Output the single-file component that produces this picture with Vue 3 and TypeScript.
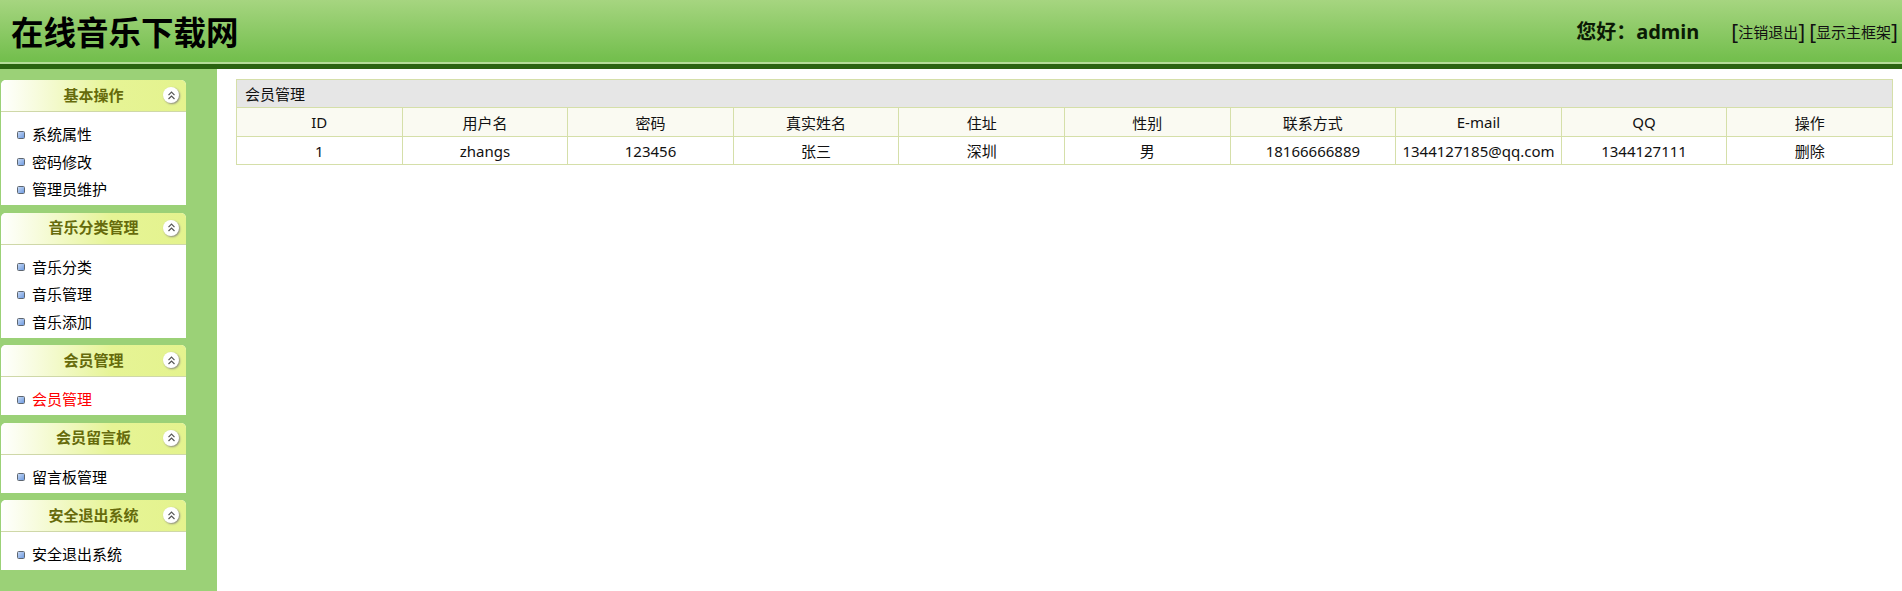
<script setup lang="ts">
interface Group { title: string; items: { label: string; active?: boolean }[] }
const groups: Group[] = [
  { title: '基本操作', items: [{ label: '系统属性' }, { label: '密码修改' }, { label: '管理员维护' }] },
  { title: '音乐分类管理', items: [{ label: '音乐分类' }, { label: '音乐管理' }, { label: '音乐添加' }] },
  { title: '会员管理', items: [{ label: '会员管理', active: true }] },
  { title: '会员留言板', items: [{ label: '留言板管理' }] },
  { title: '安全退出系统', items: [{ label: '安全退出系统' }] },
]
const columns = ['ID', '用户名', '密码', '真实姓名', '住址', '性别', '联系方式', 'E-mail', 'QQ', '操作']
const row = ['1', 'zhangs', '123456', '张三', '深圳', '男', '18166666889', '1344127185@qq.com', '1344127111', '删除']
</script>

<template>
  <div class="page">
    <header class="top">
      <h1 class="brand">在线音乐下载网</h1>
      <div class="user">
        <span class="hello">您好：admin</span>
        <span class="links"><b>[</b>注销退出<b>]</b><b class="second">[</b>显示主框架<b>]</b></span>
      </div>
    </header>
    <div class="body">
      <aside class="side">
        <section v-for="g in groups" :key="g.title" class="panel">
          <div class="panel-head">
            <span class="panel-title">{{ g.title }}</span>
            <span class="toggle">
              <svg width="9" height="9" viewBox="0 0 9 9" fill="none" stroke="#555" stroke-width="1.2">
                <path d="M1.5 4.2 4.5 1.2 7.5 4.2M1.5 8 4.5 5 7.5 8" />
              </svg>
            </span>
          </div>
          <ul class="menu">
            <li v-for="i in g.items" :key="i.label" :class="{ active: i.active }">
              <i class="dot"></i>{{ i.label }}
            </li>
          </ul>
        </section>
      </aside>
      <main class="main">
        <table class="grid">
          <thead>
            <tr><th class="caption" :colspan="columns.length">会员管理</th></tr>
            <tr class="heads"><td v-for="c in columns" :key="c">{{ c }}</td></tr>
          </thead>
          <tbody>
            <tr class="cells"><td v-for="(v, n) in row" :key="n">{{ v }}</td></tr>
          </tbody>
        </table>
      </main>
    </div>
  </div>
</template>

<style>
html, body { margin: 0; padding: 0; background: #fff; }
</style>

<style scoped>
.page {
  width: 1902px;
  height: 591px;
  display: flex;
  flex-direction: column;
  overflow: hidden;
  font-family: "Noto Sans", "Noto Sans CJK SC", sans-serif;
  font-size: 15px;
  color: #000;
}
.top {
  flex: none;
  box-sizing: border-box;
  height: 69px;
  display: flex;
  align-items: flex-start;
  justify-content: space-between;
  padding: 0 4px 0 11px;
  background: linear-gradient(#a6d580, #74bf4e 92%, #74bf4e);
  border-bottom: 5px solid #2a6410;
  box-shadow: inset 0 -2px 0 #b5dc98;
}
.brand {
  margin: 11px 0 0;
  font-size: 32.5px;
  line-height: 44px;
  font-weight: 700;
}
.user { display: flex; align-items: center; margin-top: 19px; height: 26px; }
.hello { font-size: 20px; font-weight: 700; line-height: 26px; margin-right: 32px; color: #0b1a05; }
.links { font-size: 15px; line-height: 26px; color: #111; white-space: pre; display: flex; align-items: center; }
.links b { font-weight: 400; font-size: 21px; line-height: 26px; }
.links b.second { margin-left: 4px; }
.body { flex: 1; display: flex; min-height: 0; }
.side {
  flex: none;
  box-sizing: border-box;
  width: 217px;
  padding: 11px 31px 0 1px;
  background: #9bd177;
  display: flex;
  flex-direction: column;
  gap: 7.5px;
}
.panel { background: #fff; border-radius: 5px 5px 0 0; }
.panel-head {
  position: relative;
  box-sizing: border-box;
  height: 32px;
  display: flex;
  align-items: center;
  justify-content: center;
  background: linear-gradient(90deg, #fff, #e6f495 60%, #e4f38e);
  border-bottom: 1px solid #cfd8a8;
  border-radius: 5px 5px 0 0;
}
.panel-title { font-size: 15px; font-weight: 700; color: #666b0c; line-height: 20px; position: relative; top: -1px; }
.toggle {
  position: absolute;
  right: 7px;
  top: 7px;
  width: 16px;
  height: 16px;
  border-radius: 50%;
  background: #fff;
  box-shadow: 1px 1px 2px #8c8c80;
  display: flex;
  align-items: center;
  justify-content: center;
}
.menu { list-style: none; margin: 0; padding: 9px 0 1.5px; }
.menu li {
  height: 27.5px;
  line-height: 27px;
  font-size: 15px;
  display: flex;
  align-items: center;
  padding-left: 16px;
  color: #000;
}
.menu li.active { color: #f00; }
.dot {
  flex: none;
  box-sizing: border-box;
  width: 8px;
  height: 8px;
  margin-right: 7px;
  border: 1px solid #5d6670;
  border-radius: 1.5px;
  background: linear-gradient(135deg, #c5d8f5, #6f9be0);
}
.main { flex: 1; min-width: 0; padding: 10px 9px 0 19px; }
.grid {
  width: 100%;
  table-layout: fixed;
  border-collapse: collapse;
}
.grid th, .grid td {
  border: 1px solid #d5dfa9;
  font-size: 15px;
  font-weight: 400;
  padding: 0;
  text-align: center;
  color: #111;
}
.grid .caption { background: #e6e6e6; text-align: left; padding-left: 8px; height: 27px; }
.heads td { background: #fafaf2; height: 28px; }
.cells td { height: 27px; }
</style>
